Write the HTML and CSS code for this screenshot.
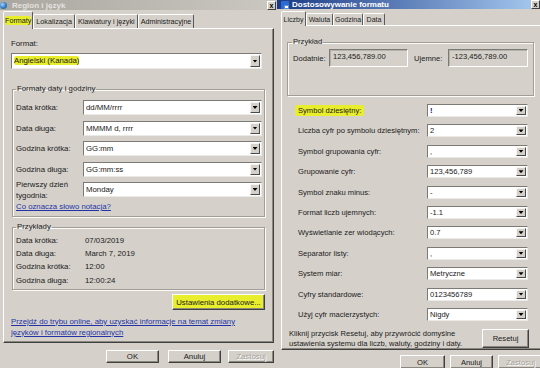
FILE: index.html
```html
<!DOCTYPE html>
<html lang="pl">
<head>
<meta charset="utf-8">
<title>Region i język</title>
<link rel="stylesheet" href="styles.css">
</head>
<body>
<div class="screen">
  <section class="win left">
    <header class="tbar tbar-off">
      <span class="globe"></span>
      <span class="ttl">Region i język</span>
      <span class="xbtn">x</span>
    </header>
    <div class="tabs">
      <span class="tab on"><span class="hl">Formaty</span></span>
      <span class="tab">Lokalizacja</span>
      <span class="tab">Klawiatury i języki</span>
      <span class="tab">Administracyjne</span>
    </div>
    <div class="panel lpanel">
      <div class="fmt">Format:</div>
      <div class="combo big"><span class="val"><span class="hl">Angielski (Kanada)</span></span><span class="arr"></span></div>
      <fieldset class="grp g-dates">
        <legend>Formaty daty i godziny</legend>
        <div class="lform">
          <span>Data krótka:</span><div class="combo"><span class="val">dd/MM/rrrr</span><span class="arr"></span></div>
          <span>Data długa:</span><div class="combo"><span class="val">MMMM d, rrrr</span><span class="arr"></span></div>
          <span>Godzina krótka:</span><div class="combo"><span class="val">GG:mm</span><span class="arr"></span></div>
          <span>Godzina długa:</span><div class="combo"><span class="val">GG:mm:ss</span><span class="arr"></span></div>
          <span class="two">Pierwszy dzień<br>tygodnia:</span><div class="combo"><span class="val">Monday</span><span class="arr"></span></div>
        </div>
        <a class="link note">Co oznacza słowo notacja?</a>
      </fieldset>
      <fieldset class="grp g-ex">
        <legend>Przykłady</legend>
        <div class="ex">
          <span>Data krótka:</span><span>07/03/2019</span>
          <span>Data długa:</span><span>March 7, 2019</span>
          <span>Godzina krótka:</span><span>12:00</span>
          <span>Godzina długa:</span><span>12:00:24</span>
        </div>
      </fieldset>
      <div class="more-row"><span class="btn more">Ustawienia dodatkowe...</span></div>
      <p class="online"><a class="link">Przejdź do trybu online, aby uzyskać informacje na temat zmiany<br>języków i formatów regionalnych</a></p>
    </div>
    <div class="btnrow lbtns">
      <span class="btn b-ok">OK</span><span class="btn b-cancel">Anuluj</span><span class="btn b-apply dis">Zastosuj</span>
    </div>
  </section>

  <section class="win right">
    <header class="tbar tbar-on">
      <span class="wicon"><span class="wicon-in"></span></span>
      <span class="ttl">Dostosowywanie formatu</span>
      <span class="xbtn">x</span>
    </header>
    <div class="tabs">
      <span class="tab on t-l">Liczby</span>
      <span class="tab t-w">Waluta</span>
      <span class="tab t-g">Godzina</span>
      <span class="tab t-d">Data</span>
    </div>
    <div class="panel rpanel">
      <fieldset class="grp g-sample">
        <legend>Przykład</legend>
        <div class="sample">
          <span class="s-lbl1">Dodatnie:</span><span class="field f1">123,456,789.00</span>
          <span class="s-lbl2">Ujemne:</span><span class="field f2">-123,456,789.00</span>
        </div>
      </fieldset>
      <div class="rform">
        <span><span class="hl hl-pad">Symbol dziesiętny:</span></span><div class="combo"><span class="val"><span class="sel">!</span></span><span class="arr"></span></div>
        <span>Liczba cyfr po symbolu dziesiętnym:</span><div class="combo"><span class="val">2</span><span class="arr"></span></div>
        <span>Symbol grupowania cyfr:</span><div class="combo"><span class="val">,</span><span class="arr"></span></div>
        <span>Grupowanie cyfr:</span><div class="combo"><span class="val">123,456,789</span><span class="arr"></span></div>
        <span>Symbol znaku minus:</span><div class="combo"><span class="val">-</span><span class="arr"></span></div>
        <span>Format liczb ujemnych:</span><div class="combo"><span class="val">-1.1</span><span class="arr"></span></div>
        <span>Wyświetlanie zer wiodących:</span><div class="combo"><span class="val">0.7</span><span class="arr"></span></div>
        <span>Separator listy:</span><div class="combo"><span class="val">,</span><span class="arr"></span></div>
        <span>System miar:</span><div class="combo"><span class="val">Metryczne</span><span class="arr"></span></div>
        <span>Cyfry standardowe:</span><div class="combo"><span class="val">0123456789</span><span class="arr"></span></div>
        <span>Użyj cyfr macierzystych:</span><div class="combo"><span class="val">Nigdy</span><span class="arr"></span></div>
      </div>
      <div class="rfoot">
        <p class="hint">Kliknij przycisk Resetuj, aby przywrócić domyślne<br>ustawienia systemu dla liczb, waluty, godziny i daty.</p>
        <span class="btn b-reset">Resetuj</span>
      </div>
    </div>
    <div class="btnrow rbtns">
      <span class="btn r-ok">OK</span><span class="btn r-cancel">Anuluj</span><span class="btn r-apply dis">Zastosuj</span>
    </div>
  </section>
</div>
</body>
</html>
```

FILE: styles.css
```css
* { box-sizing: border-box; margin: 0; padding: 0; }
html, body { margin: 0; }
body { width: 540px; height: 368px; overflow: hidden; background: #d5d1ca; }

.screen {
  display: flex;
  width: 540px;
  height: 368px;
  overflow: hidden;
  font-family: "Liberation Sans", Arial, sans-serif;
  color: #202020;
  background: #d5d1ca;
}

.win { display: flex; flex-direction: column; flex: none; overflow: hidden; }
.win.left { width: 277px; font-size: 7.8px; }
.win.right { width: 263px; font-size: 7.6px; }

.hl { background: #e9ee2c; border-radius: 2px; }
.hl-pad { padding: 1px 3px; margin-left: -3px; }

/* title bars */
.tbar { display: flex; align-items: center; flex: none; font-weight: bold; white-space: nowrap; }
.tbar-off { height: 10px; background: linear-gradient(90deg, #aaa7a1, #cbc8c2); color: #e4e2de; font-size: 8px; }
.tbar-on { height: 9px; background: linear-gradient(90deg, #1b3a86, #a6caf0); color: #fff; font-size: 8px; }
.globe {
  width: 7px; height: 7px; border-radius: 50%;
  background: radial-gradient(circle at 35% 35%, #9fd6ff, #2a6fc0 60%, #2d8a3a);
  margin-right: 5px;
}
.xbtn {
  margin-left: auto; width: 9px; height: 9px;
  background: #d5d1ca; color: #000; font-size: 7px; line-height: 7px;
  display: flex; align-items: center; justify-content: center;
  border: 1px solid; border-color: #fff #404040 #404040 #fff;
}
.left .xbtn { margin-right: 1px; }
.right .xbtn { margin-right: 0; }
.wicon {
  width: 8px; height: 8px; margin: 0 3px 0 4px;
  background: #2c6bd1; border-radius: 1px;
  display: flex; align-items: flex-end; justify-content: flex-end;
}
.wicon-in { width: 5px; height: 4px; background: #fff; border: 1px solid #5b8ed8; }

/* tabs */
.tabs { display: flex; align-items: flex-end; flex: none; position: relative; z-index: 1; }
.left .tabs { height: 18px; padding-left: 3px; font-size: 7.2px; }
.right .tabs { height: 16px; padding-left: 4px; font-size: 7px; }
.tab {
  display: flex; align-items: center; justify-content: center;
  padding: 0 2px; white-space: nowrap;
  background: #d5d1ca;
  border: 1px solid; border-bottom: 0;
  border-color: #fff #5a5a5a transparent #fff;
  border-radius: 2px 2px 0 0;
}
.left .tab { height: 14px; }
.left .tab.on { height: 18px; margin-bottom: -1px; padding: 0 1px; }
.right .tab { height: 12px; }
.right .tab.on { height: 15px; margin-bottom: -1px; }
.t-l { width: 25px; }
.t-w { width: 27px; }
.t-g { width: 30px; }
.t-d { width: 22px; }

/* panels */
.panel {
  background: #d5d1ca;
  border: 1px solid; border-color: #fff #404040 #404040 #fff;
  box-shadow: inset -1px -1px 0 #8a877f;
  flex: none;
}
.lpanel {
  margin-left: 3px; width: 271px; height: 315px;
  padding: 0 10px 0 7px;
  display: flex; flex-direction: column;
}
.fmt { margin-top: 10px; line-height: 10px; }

/* combos */
.combo {
  display: flex; height: 15px; background: #fff;
  border: 1px solid; border-color: #7c7a75 #eceae6 #eceae6 #7c7a75;
  padding: 1px;
}
.combo .val { flex: 1; line-height: 11px; padding-left: 1px; overflow: hidden; white-space: nowrap; }
.combo .arr {
  width: 10px; flex: none; background: #d5d1ca;
  border: 1px solid; border-color: #f6f5f2 #4a4a4a #4a4a4a #f6f5f2;
  display: flex; align-items: center; justify-content: center;
}
.combo .arr::before {
  content: ""; width: 5px; height: 3px; background: #000;
  clip-path: polygon(0 0, 100% 0, 50% 100%);
}
.combo.big { margin-top: 4px; height: 16px; width: 251px; }
.combo.big .val { line-height: 12px; }

/* group boxes */
.grp {
  border: 1px solid #a29e96;
  box-shadow: inset 1px 1px 0 #fbfbfa, 1px 1px 0 #fbfbfa;
  min-width: 0;
}
.grp legend { padding: 0 1px; line-height: 10px; margin-left: 0; }
.g-dates { margin: 15px 0 0 1px; width: 253px; padding: 6px 2px 4px 3px; }
.lform {
  display: grid; grid-template-columns: 67px 179px;
  grid-auto-rows: 15px; row-gap: 5.5px; align-items: center;
}
.lform .two { line-height: 11px; }
.note { display: block; margin-top: 5px; line-height: 10px; }
.g-ex { margin: 5px 0 0 1px; width: 253px; padding: 1.5px 2px 2px 3px; }
.ex { display: grid; grid-template-columns: 69px 1fr; grid-auto-rows: 13.4px; line-height: 13.4px; }

.link { color: #2233a8; text-decoration: underline; }

/* buttons */
.btn {
  display: flex; align-items: center; justify-content: center;
  background: #d5d1ca; white-space: nowrap; flex: none;
  border: 1px solid; border-color: #fff #404040 #404040 #fff;
  box-shadow: inset -1px -1px 0 #8a877f;
}
.btn.dis { color: #a6a39d; text-shadow: 1px 1px 0 #fff; }
.more-row { display: flex; justify-content: flex-end; margin: 4px -2px 0 0; }
.btn.more { width: 93px; height: 16px; background: #e9ee2c; }
.online { margin-top: 5.5px; line-height: 11px; }

.btnrow { display: flex; flex: none; }
.lbtns { margin-top: 7px; padding-left: 106px; }
.lbtns .btn { height: 13px; }
.b-ok { width: 53px; }
.b-cancel { width: 53px; margin-left: 9px; }
.b-apply { width: 46px; margin-left: 7px; }

/* right window */
.rpanel {
  margin-left: 4px; width: 270px; height: 325px;
  padding: 0 0 0 5px;
  display: flex; flex-direction: column;
}
.g-sample { margin-top: 11px; width: 247px; padding: 2px 4px 28px 5px; }
.g-sample legend { margin-left: -1px; }
.sample { display: flex; align-items: center; }
.s-lbl1 { width: 36px; }
.s-lbl2 { width: 34px; margin-left: 6px; }
.field {
  height: 18px; padding: 2px 0 0 3px; line-height: 10px;
  border: 1px solid; border-color: #7c7a75 #fff #fff #7c7a75;
  box-shadow: inset 1px 1px 0 #b5b2ab;
}
.f1 { width: 79px; }
.f2 { width: 80px; }

.rform {
  margin-top: 8px; padding-left: 11px;
  display: grid; grid-template-columns: 129px 101px;
  grid-auto-rows: 13px; row-gap: 7.4px; align-items: center;
}
.rform .combo { height: 13px; }
.rform .combo .val { line-height: 9px; }
.sel { color: #10207a; font-weight: bold; }

.rfoot { display: flex; align-items: flex-start; margin-top: 8.5px; padding-left: 2px; }
.hint { width: 193px; line-height: 9.5px; }
.b-reset { width: 47px; height: 19px; }

.rbtns { margin-top: 5px; padding-left: 123px; }
.rbtns .btn { height: 14px; }
.r-ok { width: 45px; }
.r-cancel { width: 43px; margin-left: 5px; }
.r-apply { width: 45px; margin-left: 5px; }
```
